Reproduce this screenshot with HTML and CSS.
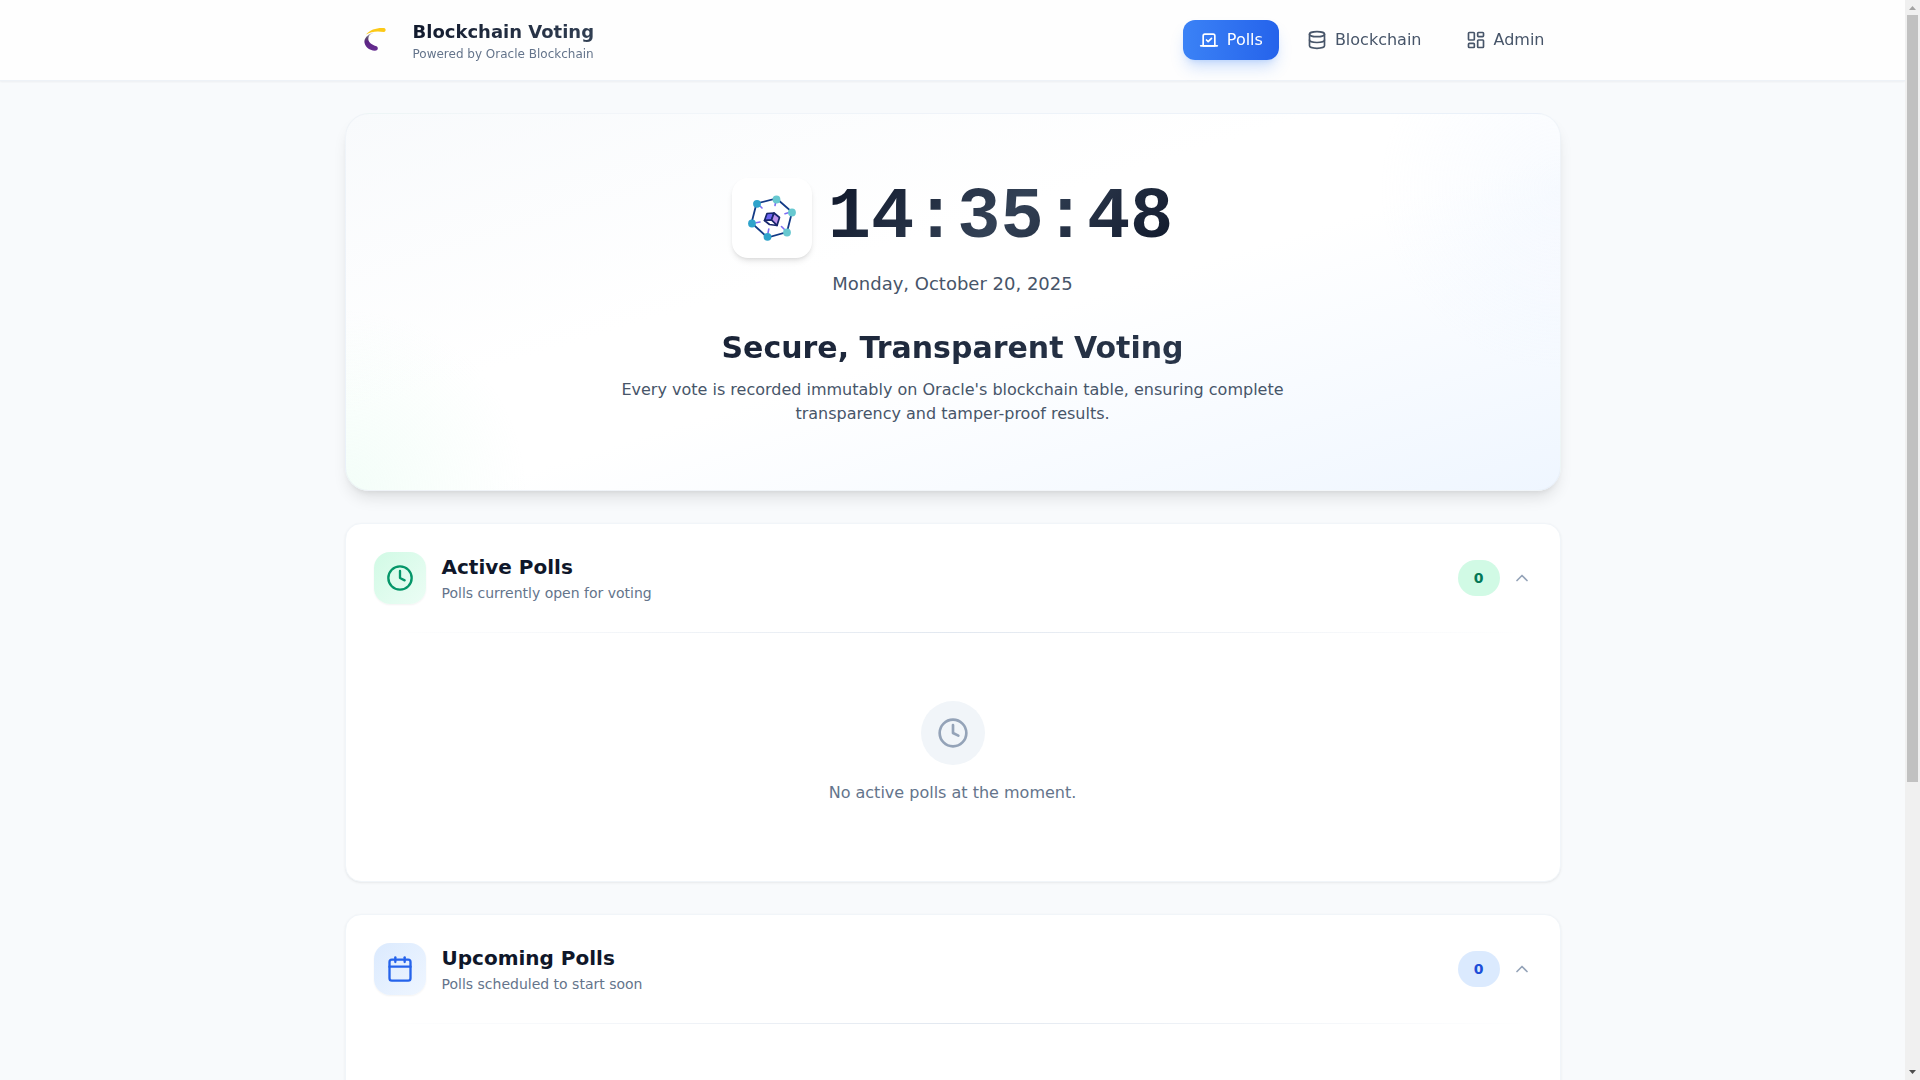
FILE: index.html
```html
<!DOCTYPE html>
<html lang="en">
<head>
	<meta charset="utf-8">
	<meta name="viewport" content="width=device-width, initial-scale=1">
	<title>Blockchain Voting</title>
	<link rel="stylesheet" href="styles.css">
</head>
<body>
<div class="page">
	<header class="topbar">
		<div class="container topbar-inner">
			<a href="#" class="brand">
				<svg class="brand-logo" viewBox="0 0 56 56">
					<defs>
						<linearGradient id="swoosh" x1="0" y1="0" x2="0" y2="1">
							<stop offset="0" stop-color="#c9c4d2"/>
							<stop offset="0.3" stop-color="#5b4a6e"/>
							<stop offset="0.5" stop-color="#5c2483"/>
							<stop offset="1" stop-color="#662d91"/>
						</linearGradient>
					</defs>
					<path d="M29 20.500C24 21.500 20 25 19.400 29C19 34 24 38.500 30 38.800C33 38.800 33.800 35.500 31.500 34.300C27 33 23.500 30.500 23.300 27C23.300 24 25 21.800 29 20.500Z" fill="url(#swoosh)"/>
					<path d="M21 22.500C25 17.500 32 15.500 39 16C41.200 16.400 41.200 19.600 39 20C32 18.800 26 19.500 21 22.500Z" fill="#fcc917"/>
				</svg>
				<span class="brand-text">
					<span class="brand-name">Blockchain Voting</span>
					<span class="brand-sub">Powered by Oracle Blockchain</span>
				</span>
			</a>
			<nav class="nav">
				<a href="#" class="nav-link active">
					<svg class="icon icon-sm" viewBox="0 0 24 24"><path d="m9 12 2 2 4-4"/><path d="M5 7c0-1.1.9-2 2-2h10a2 2 0 0 1 2 2v12H5V7Z"/><path d="M22 19H2"/></svg>
					Polls
				</a>
				<a href="#" class="nav-link">
					<svg class="icon icon-sm" viewBox="0 0 24 24"><ellipse cx="12" cy="5" rx="9" ry="3"/><path d="M3 5v14a9 3 0 0 0 18 0V5"/><path d="M3 12a9 3 0 0 0 18 0"/></svg>
					Blockchain
				</a>
				<a href="#" class="nav-link">
					<svg class="icon icon-sm" viewBox="0 0 24 24"><rect x="3" y="3" width="7" height="9" rx="1"/><rect x="14" y="3" width="7" height="5" rx="1"/><rect x="14" y="12" width="7" height="9" rx="1"/><rect x="3" y="16" width="7" height="5" rx="1"/></svg>
					Admin
				</a>
			</nav>
		</div>
	</header>

	<main class="container content">
		<section class="hero">
			<div class="clock">
				<div class="clock-logo">
					<svg viewBox="0 0 48 48" width="48" height="48">
						<path d="M28.500 4.500L44 18L39 38L19.500 43.500L3.500 29L8.500 9.500Z" fill="none" stroke="#133a86" stroke-width="1.800"/>
						<path d="M27.800 7.500l-.8 4M41 18.500l-4 1.300M36.500 35.500l-3-3M20 39l.8-4M8 28.700l4-.7M11 11l3 3" fill="none" stroke="#7c6cf2" stroke-width="1.600" stroke-linecap="round"/>
						<g fill="#67c8d0"><circle cx="28.500" cy="5.500" r="3.900"/><circle cx="44" cy="18.500" r="3.900"/><circle cx="39" cy="38.500" r="3.900"/></g>
						<g fill="#2fa3cb"><circle cx="9" cy="9.800" r="3.900"/><circle cx="4" cy="29.500" r="3.900"/><circle cx="19.500" cy="42.800" r="3.900"/></g>
						<g stroke="#17256b" stroke-width="1.700" stroke-linejoin="round">
							<path d="M19 19.500L26 19L23.500 26L16.500 26.500Z" fill="#6a63f0"/>
							<path d="M26 19L31.500 23.500L29 31.500L23.500 26Z" fill="#bd93ea"/>
							<path d="M16.500 26.500L23.500 26L29 31.500L21.500 30.500Z" fill="#fff"/>
						</g>
					</svg>
				</div>
				<time class="clock-time">14:35:48</time>
			</div>
			<p class="hero-date">Monday, October 20, 2025</p>
			<h1 class="hero-title">Secure, Transparent Voting</h1>
			<p class="hero-text">Every vote is recorded immutably on Oracle's blockchain table, ensuring complete transparency and tamper-proof results.</p>
		</section>

		<section class="card">
			<button type="button" class="card-head" aria-expanded="true">
				<span class="tile green">
					<svg class="icon icon-md" viewBox="0 0 24 24"><circle cx="12" cy="12" r="10"/><path d="M12 6v6l4 2"/></svg>
				</span>
				<span class="card-titles">
					<span class="card-title">Active Polls</span>
					<span class="card-sub">Polls currently open for voting</span>
				</span>
				<span class="badge badge-green">0</span>
				<svg class="icon icon-sm chevron" viewBox="0 0 24 24"><path d="m18 15-6-6-6 6"/></svg>
			</button>
			<div class="divider"></div>
			<div class="card-body">
				<div class="empty">
					<span class="empty-icon">
						<svg class="icon icon-lg" viewBox="0 0 24 24"><circle cx="12" cy="12" r="10"/><path d="M12 6v6l4 2"/></svg>
					</span>
					<p>No active polls at the moment.</p>
				</div>
			</div>
		</section>

		<section class="card card-tall">
			<button type="button" class="card-head" aria-expanded="true">
				<span class="tile blue">
					<svg class="icon icon-md" viewBox="0 0 24 24"><path d="M8 2v4"/><path d="M16 2v4"/><rect width="18" height="18" x="3" y="4" rx="2"/><path d="M3 10h18"/></svg>
				</span>
				<span class="card-titles">
					<span class="card-title">Upcoming Polls</span>
					<span class="card-sub">Polls scheduled to start soon</span>
				</span>
				<span class="badge badge-blue">0</span>
				<svg class="icon icon-sm chevron" viewBox="0 0 24 24"><path d="m18 15-6-6-6 6"/></svg>
			</button>
			<div class="divider"></div>
		</section>
	</main>
</div>

<div class="scrollbar" aria-hidden="true">
	<svg class="arrow arrow-up" viewBox="0 0 15 15"><path d="M4 10h7L7.500 6z"/></svg>
	<div class="track"><div class="thumb"></div></div>
	<svg class="arrow" viewBox="0 0 15 15"><path d="M4 5h7L7.500 9z"/></svg>
</div>
</body>
</html>
```

FILE: styles.css
```css
* {
	box-sizing: border-box;
	margin: 0;
	padding: 0;
}
body {
	display: flex;
	height: 100vh;
	overflow: hidden;
	background: #f8fafc;
	color: #0f172a;
	font-family: "DejaVu Sans", sans-serif;
	font-size: 16px;
	line-height: 24px;
}
a {
	color: inherit;
	text-decoration: none;
}

/* scrolling area */
.page {
	flex: 1;
	overflow-y: auto;
	scrollbar-width: none;
}
.scrollbar {
	display: flex;
	flex-direction: column;
	width: 15px;
	background: #f0f0f0;
}
.arrow {
	width: 15px;
	height: 15px;
	fill: #4d4d4d;
}
.arrow-up {
	fill: #a3a3a3;
}
.track {
	flex: 1;
	padding: 0 2px;
}
.thumb {
	height: 73%;
	background: #c1c1c1;
}
.container {
	max-width: 1280px;
	margin: 0 auto;
	padding: 0 32px;
}
.icon {
	flex: none;
	fill: none;
	stroke: currentColor;
	stroke-width: 2;
	stroke-linecap: round;
	stroke-linejoin: round;
}
.icon-sm { width: 20px; height: 20px; }
.icon-md { width: 28px; height: 28px; }
.icon-lg { width: 32px; height: 32px; }

/* header */
.topbar {
	position: sticky;
	top: 0;
	z-index: 10;
	background: #fefefe;
	border-bottom: 1px solid #eef2f7;
	box-shadow: 0 1px 2px rgba(15, 23, 42, 0.05);
}
.topbar-inner {
	display: flex;
	align-items: center;
	justify-content: space-between;
	height: 80px;
}
.brand {
	display: flex;
	align-items: center;
	gap: 12px;
}
.brand-logo {
	width: 56px;
	height: 56px;
}
.brand-text {
	display: flex;
	flex-direction: column;
}
.brand-name {
	font-size: 18px;
	line-height: 28px;
	font-weight: bold;
	background: linear-gradient(135deg, #0f172a, #334155);
	-webkit-background-clip: text;
	background-clip: text;
	color: transparent;
}
.brand-sub {
	font-size: 12px;
	line-height: 16px;
	color: #64748b;
}
.nav {
	display: flex;
	gap: 12px;
}
.nav-link {
	display: flex;
	align-items: center;
	gap: 8px;
	padding: 8px 16px;
	border-radius: 12px;
	color: #475569;
}
.nav-link.active {
	color: #fff;
	background: linear-gradient(to right, #3b82f6, #2563eb);
	box-shadow: 0 10px 15px -3px rgba(59, 130, 246, 0.25), 0 4px 6px -4px rgba(59, 130, 246, 0.25);
}

.content {
	display: flex;
	flex-direction: column;
	gap: 32px;
	padding-top: 32px;
	padding-bottom: 32px;
}

/* hero */
.hero {
	display: flex;
	flex-direction: column;
	align-items: center;
	padding: 64px;
	border: 1px solid rgba(226, 232, 240, 0.4);
	border-radius: 24px;
	text-align: center;
	background:
		radial-gradient(circle at 100% 20%, rgba(219, 234, 254, 0.2), transparent 180px),
		radial-gradient(circle at 0 100%, rgba(209, 250, 229, 0.25), transparent 180px),
		linear-gradient(to bottom right, #f8fafc, #fff 40%, #fff 55%, #eff6ff);
	box-shadow: 0 10px 15px -3px rgba(0, 0, 0, 0.1), 0 4px 6px -4px rgba(0, 0, 0, 0.1);
}
.clock {
	display: flex;
	align-items: center;
	gap: 16px;
	margin-bottom: 12px;
}
.clock-logo {
	display: flex;
	padding: 16px;
	border-radius: 16px;
	background: #fff;
	box-shadow: 0 4px 6px -1px rgba(0, 0, 0, 0.1), 0 2px 4px -2px rgba(0, 0, 0, 0.1);
}
.clock-time {
	font-family: "Liberation Mono", monospace;
	font-size: 72px;
	line-height: 72px;
	font-weight: bold;
	background: linear-gradient(135deg, #0f172a, #334155, #0f172a);
	-webkit-background-clip: text;
	background-clip: text;
	color: transparent;
}
.hero-date {
	margin-bottom: 32px;
	font-size: 18px;
	line-height: 28px;
	color: #475569;
}
.hero-title {
	align-self: stretch;
	margin-bottom: 12px;
	font-size: 30px;
	line-height: 36px;
	background: linear-gradient(135deg, #0f172a, #334155);
	-webkit-background-clip: text;
	background-clip: text;
	color: transparent;
}
.hero-text {
	max-width: 672px;
	color: #475569;
}

/* poll sections */
.card {
	border: 1px solid #f1f5f9;
	border-radius: 16px;
	background: #fff;
	box-shadow: 0 1px 3px rgba(0, 0, 0, 0.06), 0 1px 2px -1px rgba(0, 0, 0, 0.06);
}
.card-tall {
	min-height: 532px;
}
.card-head {
	display: flex;
	align-items: center;
	width: 100%;
	padding: 28px;
	border: 0;
	background: none;
	color: inherit;
	font: inherit;
	text-align: left;
	cursor: pointer;
}
.tile {
	display: flex;
	padding: 12px;
	border-radius: 16px;
	box-shadow: 0 1px 2px rgba(0, 0, 0, 0.05);
}
.green {
	color: #059669;
	background: linear-gradient(to bottom right, #d1fae5, #ecfdf5);
}
.blue {
	color: #2563eb;
	background: linear-gradient(to bottom right, #dbeafe, #eff6ff);
}
.card-titles {
	display: flex;
	flex: 1;
	flex-direction: column;
	gap: 2px;
	margin-left: 16px;
}
.card-title {
	font-size: 20px;
	line-height: 28px;
	font-weight: bold;
}
.card-sub {
	font-size: 14px;
	line-height: 20px;
	color: #64748b;
}
.badge {
	padding: 8px 16px;
	border-radius: 18px;
	font-size: 14px;
	line-height: 20px;
	font-weight: bold;
}
.badge-green {
	color: #047857;
	background: #d1fae5;
}
.badge-blue {
	color: #1d4ed8;
	background: #dbeafe;
}
.chevron {
	margin-left: 12px;
	color: #94a3b8;
}
.divider {
	height: 1px;
	margin: 0 28px;
	background: linear-gradient(to right, transparent, #e2e8f0, transparent);
}
.card-body {
	padding: 20px 28px 28px;
}
.empty {
	display: flex;
	flex-direction: column;
	align-items: center;
	gap: 16px;
	padding: 48px 0;
	color: #64748b;
}
.empty-icon {
	display: flex;
	padding: 16px;
	border-radius: 50%;
	background: #f1f5f9;
	color: #94a3b8;
}
```
